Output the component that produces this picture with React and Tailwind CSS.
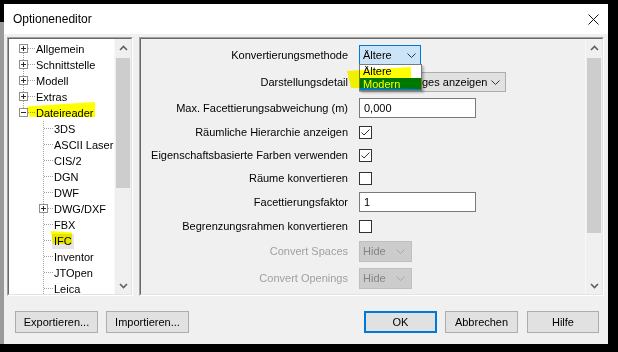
import React from "react";

const TREE = [
  { label: "Allgemein", depth: 0, box: "plus", up: false, down: true },
  { label: "Schnittstelle", depth: 0, box: "plus", up: true, down: true },
  { label: "Modell", depth: 0, box: "plus", up: true, down: true },
  { label: "Extras", depth: 0, box: "plus", up: true, down: true },
  { label: "Dateireader", depth: 0, box: "minus", up: true, down: false },
  { label: "3DS", depth: 1 },
  { label: "ASCII Laser", depth: 1 },
  { label: "CIS/2", depth: 1 },
  { label: "DGN", depth: 1 },
  { label: "DWF", depth: 1 },
  { label: "DWG/DXF", depth: 1, box: "plus" },
  { label: "FBX", depth: 1 },
  { label: "IFC", depth: 1, selected: true },
  { label: "Inventor", depth: 1 },
  { label: "JTOpen", depth: 1 },
  { label: "Leica", depth: 1 },
];

const DOT = { stroke: "#a0a0a0", strokeDasharray: "1 1" };

function ExpandBox({ cx, sign }) {
  return (
    <g>
      <rect x={cx - 4} y={3.5} width={8} height={8} fill="#fff" stroke="#8f8f8f" />
      <line x1={cx - 2.5} y1={7.5} x2={cx + 2.5} y2={7.5} stroke="#2b2b2b" />
      {sign === "plus" && <line x1={cx} y1={5} x2={cx} y2={10} stroke="#2b2b2b" />}
    </g>
  );
}

function TreeRow({ item }) {
  const root = item.depth === 0;
  const w = root ? 27 : 45;
  const cx = root ? 14.5 : 34.5;
  return (
    <div className="flex h-4 shrink-0 items-center">
      <svg width={w} height={16} className="shrink-0">
        {root ? (
          <>
            {item.up && <line x1={cx} y1={0} x2={cx} y2={3} {...DOT} />}
            {item.down && <line x1={cx} y1={12} x2={cx} y2={16} {...DOT} />}
          </>
        ) : (
          <line x1={cx} y1={0} x2={cx} y2={16} {...DOT} />
        )}
        <line x1={item.box ? cx + 4.5 : cx + 0.5} y1={7.5} x2={w - 1} y2={7.5} {...DOT} />
        {item.box && <ExpandBox cx={cx} sign={item.box} />}
      </svg>
      <span
        className={
          item.selected
            ? "-ml-[2px] bg-[#e5e5e5] px-[2px] py-[2px] leading-none"
            : "leading-none"
        }
      >
        {item.label}
      </span>
    </div>
  );
}

function Chevron({ color = "#333" }) {
  return (
    <svg width={9} height={5} className="shrink-0">
      <polyline points="0.5,0.5 4.5,4.5 8.5,0.5" fill="none" stroke={color} />
    </svg>
  );
}

function ScrollArrow({ up }) {
  return (
    <div className="flex h-[17px] shrink-0 items-center justify-center">
      <svg width={9} height={6}>
        <polyline
          points={up ? "1,5 4.5,1.5 8,5" : "1,1 4.5,4.5 8,1"}
          fill="none"
          stroke="#606060"
          strokeWidth={1.6}
        />
      </svg>
    </div>
  );
}

function Scrollbar({ thumb }) {
  return (
    <div className="flex w-[17px] shrink-0 flex-col border-l border-[#f8f8f8] bg-[#f0f0f0]">
      <ScrollArrow up />
      <div className={`mx-[1px] mt-[2px] shrink-0 bg-[#cdcdcd] ${thumb}`} />
      <div className="flex-1" />
      <ScrollArrow />
    </div>
  );
}

function Sunken({ className, children }) {
  return (
    <div
      className={`border border-t-[#a0a0a0] border-l-[#a0a0a0] border-r-white border-b-white ${className}`}
    >
      <div className="flex h-full w-full border border-t-[#696969] border-l-[#696969] border-r-[#e3e3e3] border-b-[#e3e3e3]">
        {children}
      </div>
    </div>
  );
}

function Row({ h, label, disabled, children }) {
  return (
    <div className={`flex shrink-0 items-center ${h}`}>
      <div
        className={`w-[207px] shrink-0 text-right leading-none ${
          disabled ? "text-[#a0a0a0]" : "text-black"
        }`}
      >
        {label}
      </div>
      <div className="ml-[11px] flex items-center">{children}</div>
    </div>
  );
}

function Checkbox({ checked }) {
  return (
    <div className="flex h-[13px] w-[13px] items-center justify-center border border-[#333] bg-white">
      {checked && (
        <svg width={11} height={11}>
          <polyline points="1.5,5.5 4,8 9.5,2.5" fill="none" stroke="#333" />
        </svg>
      )}
    </div>
  );
}

function TextInput({ value }) {
  return (
    <div className="flex h-[20px] w-[117px] items-center border border-[#7a7a7a] bg-white pl-[4px] leading-none">
      {value}
    </div>
  );
}

function DisabledSelect() {
  return (
    <div className="flex h-[21px] w-[53px] items-center justify-between border border-[#bfbfbf] bg-[#cccccc] pl-[3px] pr-[6px] leading-none text-[#838383]">
      <span>Hide</span>
      <Chevron color="#a8a8a8" />
    </div>
  );
}

function Button({ label, primary, w }) {
  return (
    <div
      className={`flex h-[22px] items-center justify-center bg-[#e1e1e1] leading-none ${w} ${
        primary ? "border-2 border-[#0078d7]" : "border border-[#adadad]"
      }`}
    >
      {label}
    </div>
  );
}

export default function App() {
  return (
    <div className="flex h-[352px] w-[618px] flex-col overflow-hidden bg-black font-['Liberation_Sans',Arial,sans-serif] text-[11px] text-black">
      <div className="h-[4px] shrink-0" />
      <div className="flex shrink-0">
        <div className="mt-[18px] h-[322px] w-[4px] bg-[#9a9a9a]" />
        <div className="flex h-[340px] w-[604px] flex-col bg-[#f0f0f0]">
          {/* Title bar */}
          <div className="flex h-[30px] shrink-0 items-center justify-between bg-white pl-[9px] pr-[9px]">
            <span className="text-[12px] leading-none">Optioneneditor</span>
            <svg width={11} height={11}>
              <line x1={0.5} y1={0.5} x2={10.5} y2={10.5} stroke="#111" />
              <line x1={10.5} y1={0.5} x2={0.5} y2={10.5} stroke="#111" />
            </svg>
          </div>

          {/* Panels */}
          <div className="ml-[3px] mt-[3px] flex h-[259px] shrink-0 gap-[6px]">
            <Sunken className="h-full w-[126px]">
              <div className="relative flex flex-1 flex-col overflow-hidden bg-white pt-[2px]">
                {TREE.map((item) => (
                  <TreeRow key={item.label} item={item} />
                ))}
                <div className="absolute left-[18px] top-[63px] h-[15px] w-[68px] bg-[#ffff00] mix-blend-multiply [clip-path:polygon(0_30%,100%_0,100%_100%,4%_100%)]" />
                <div className="absolute left-[42px] top-[192px] h-[13px] w-[21px] bg-[#ffff00] mix-blend-multiply [clip-path:polygon(0_0,100%_12%,100%_100%,8%_100%)]" />
              </div>
              <Scrollbar thumb="h-[130px]" />
            </Sunken>

            <Sunken className="h-full w-[465px]">
              <div className="relative flex flex-1 flex-col pt-[3px]">
                <Row h="h-[26px]" label="Konvertierungsmethode">
                  <div className="flex h-[20px] w-[62px] items-center justify-between border border-[#0078d7] bg-[#cce4f7] pl-[3px] pr-[4px] leading-none">
                    <span>Ältere</span>
                    <Chevron />
                  </div>
                </Row>
                <Row h="h-[28px]" label="Darstellungsdetail">
                  <div className="flex h-[20px] w-[147px] items-center justify-between border border-[#adadad] bg-[#e1e1e1] pl-[62px] pr-[5px] leading-none">
                    <span>ges anzeigen</span>
                    <Chevron />
                  </div>
                </Row>
                <Row h="h-[24px]" label="Max. Facettierungsabweichung (m)">
                  <TextInput value="0,000" />
                </Row>
                <Row h="h-[24px]" label="Räumliche Hierarchie anzeigen">
                  <Checkbox checked />
                </Row>
                <Row h="h-[22px]" label="Eigenschaftsbasierte Farben verwenden">
                  <Checkbox checked />
                </Row>
                <Row h="h-[24px]" label="Räume konvertieren">
                  <Checkbox />
                </Row>
                <Row h="h-[24px]" label="Facettierungsfaktor">
                  <TextInput value="1" />
                </Row>
                <Row h="h-[24px]" label="Begrenzungsrahmen konvertieren">
                  <Checkbox />
                </Row>
                <Row h="h-[26px]" label="Convert Spaces" disabled>
                  <DisabledSelect />
                </Row>
                <Row h="h-[28px]" label="Convert Openings" disabled>
                  <DisabledSelect />
                </Row>

                {/* open dropdown list */}
                <div className="absolute left-[218px] top-[25px] flex h-[27px] w-[63px] flex-col border border-[#7a7a7a] bg-white shadow-[2px_2px_2px_rgba(0,0,0,0.25)]">
                  <div className="flex h-[13px] items-center pl-[3px] leading-none">Ältere</div>
                  <div className="flex h-[12px] items-center bg-[#0078d7] pl-[3px] leading-none text-white">
                    Modern
                  </div>
                </div>
                {/* highlighter */}
                <div className="absolute left-[206px] top-[28px] h-[22px] w-[75px] bg-[#ffff00] mix-blend-multiply [clip-path:polygon(0_4px,64px_0,64px_11px,75px_11px,75px_22px,4px_21px)]" />
              </div>
              <Scrollbar thumb="h-[175px]" />
            </Sunken>
          </div>

          {/* Buttons */}
          <div className="mt-[15px] flex shrink-0 pl-[11px] pr-[9px]">
            <Button label="Exportieren..." w="w-[83px]" />
            <div className="ml-[8px]">
              <Button label="Importieren..." w="w-[83px]" />
            </div>
            <div className="flex-1" />
            <Button label="OK" primary w="w-[73px]" />
            <div className="ml-[8px]">
              <Button label="Abbrechen" w="w-[73px]" />
            </div>
            <div className="ml-[9px]">
              <Button label="Hilfe" w="w-[72px]" />
            </div>
          </div>
        </div>
      </div>
    </div>
  );
}
